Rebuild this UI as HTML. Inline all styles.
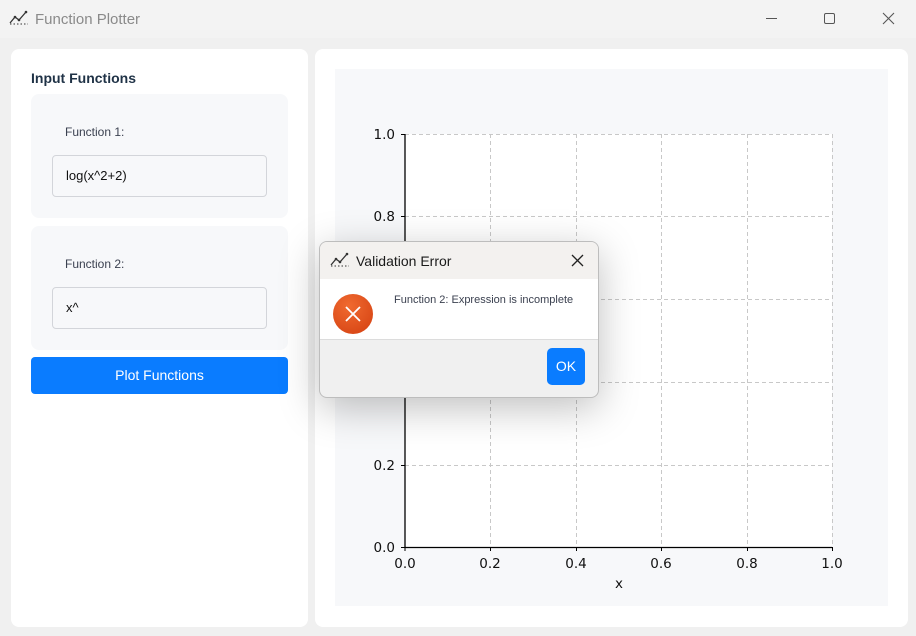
<!DOCTYPE html>
<html><head><style>
*{box-sizing:border-box;margin:0;padding:0}
body{width:916px;height:636px;background:#f0f0f0;font-family:"Liberation Sans",sans-serif;position:relative;overflow:hidden}
.abs{position:absolute}
.card{background:#f7f8fa;border-radius:8px}
.inp{background:#f7f8fa;border:1px solid #d3d5da;border-radius:4px;font-size:13px;color:#111;padding-left:13px;line-height:40px}
.lbl{font-size:12px;color:#3b4150}
.tk{font-size:14px;color:#111}
</style></head><body>
<div class="abs" style="left:0;top:0;width:916px;height:38px;background:#f3f3f3"></div>
<svg class="abs" style="left:9px;top:10px" width="20" height="16" viewBox="0 0 20 16"><polyline points="1,13 6,7 10,10 17,2" fill="none" stroke="#333" stroke-width="1.3"/><polyline points="1,14 19,14" fill="none" stroke="#333" stroke-width="1" stroke-dasharray="1.5 2"/><circle cx="6" cy="7" r="1.3" fill="#333"/><circle cx="10" cy="10" r="1.3" fill="#333"/><circle cx="17" cy="2" r="1.3" fill="#333"/></svg>
<div class="abs" style="left:35px;top:11px;font-size:15px;color:#8a8a8a">Function Plotter</div>
<div class="abs" style="left:766px;top:18px;width:11px;height:1px;background:#555"></div>
<div class="abs" style="left:824px;top:13px;width:11px;height:11px;border:1px solid #555;border-radius:2px"></div>
<svg class="abs" style="left:882px;top:12px" width="13" height="13"><path d="M1 1L12 12M12 1L1 12" stroke="#555" stroke-width="1.1"/></svg>

<div class="abs" style="left:11px;top:49px;width:297px;height:578px;background:#fff;border-radius:8px"></div>
<div class="abs" style="left:31px;top:70px;font-size:14px;font-weight:bold;color:#1f3246">Input Functions</div>
<div class="abs card" style="left:31px;top:94px;width:257px;height:124px"></div>
<div class="abs lbl" style="left:65px;top:125px">Function 1:</div>
<div class="abs inp" style="left:52px;top:155px;width:215px;height:42px">log(x^2+2)</div>
<div class="abs card" style="left:31px;top:226px;width:257px;height:124px"></div>
<div class="abs lbl" style="left:65px;top:257px">Function 2:</div>
<div class="abs inp" style="left:52px;top:287px;width:215px;height:42px">x^</div>
<div class="abs" style="left:31px;top:357px;width:257px;height:37px;background:#0a7cff;border-radius:4px;color:#fff;font-size:14px;text-align:center;line-height:37px">Plot Functions</div>

<div class="abs" style="left:315px;top:49px;width:593px;height:578px;background:#fff;border-radius:8px"></div>
<div class="abs" style="left:335px;top:69px;width:553px;height:537px;background:#f7f8fa"></div>
<svg class="abs" style="left:335px;top:69px" width="553" height="537">
<rect x="70" y="65" width="427" height="413" fill="#fff"/>
<g stroke="#c8c8c8" stroke-dasharray="4 3" stroke-width="1">
<path d="M155.5 65V478M241.5 65V478M326.5 65V478M412.5 65V478M497.5 65V478"/>
<path d="M70 65.5H497M70 147.5H497M70 230.5H497M70 313.5H497M70 396.5H497"/>
</g>
<path d="M70 65V478.5H497" fill="none" stroke="#000" stroke-width="1.3"/>
<g stroke="#000"><path d="M66 65.5H70M66 147.5H70M66 230.5H70M66 313.5H70M66 396.5H70M66 478.5H70"/><path d="M70 478v4M155.5 478v4M241.5 478v4M326.5 478v4M412.5 478v4M497.5 478v4"/></g>
<g font-family="DejaVu Sans,sans-serif" font-size="13.5" fill="#111" text-anchor="end">
<text x="60" y="70">1.0</text><text x="60" y="152">0.8</text><text x="60" y="235">0.6</text><text x="60" y="318">0.4</text><text x="60" y="401">0.2</text><text x="60" y="483">0.0</text></g>
<g font-family="DejaVu Sans,sans-serif" font-size="13.5" fill="#111" text-anchor="middle">
<text x="70" y="499">0.0</text><text x="155" y="499">0.2</text><text x="241" y="499">0.4</text><text x="326" y="499">0.6</text><text x="412" y="499">0.8</text><text x="497" y="499">1.0</text><text x="284" y="519">x</text></g>
</svg>

<div class="abs" style="left:319px;top:241px;width:280px;height:157px;border:1px solid #bdbdbd;border-radius:8px;overflow:hidden;box-shadow:0 10px 40px rgba(0,0,0,0.25);background:#f0f0f0">
 <div style="height:37px;background:#f3f1ef;position:relative">
  <svg class="abs" style="left:10px;top:10px" width="20" height="16" viewBox="0 0 20 16"><polyline points="1,13 6,7 10,10 17,2" fill="none" stroke="#333" stroke-width="1.3"/><polyline points="1,14 19,14" fill="none" stroke="#333" stroke-width="1" stroke-dasharray="1.5 2"/><circle cx="6" cy="7" r="1.3" fill="#333"/><circle cx="10" cy="10" r="1.3" fill="#333"/><circle cx="17" cy="2" r="1.3" fill="#333"/></svg>
  <div class="abs" style="left:36px;top:11px;font-size:14px;color:#1a1a1a">Validation Error</div>
  <svg class="abs" style="left:251px;top:12px" width="13" height="13"><path d="M1 1L12 12M12 1L1 12" stroke="#222" stroke-width="1.3"/></svg>
 </div>
 <div style="height:61px;background:#fff;border-bottom:1px solid #dcdcdc;position:relative">
  <div class="abs" style="left:13px;top:15px;width:40px;height:40px;border-radius:50%;background:radial-gradient(circle at 40% 30%,#f06a30,#d33f10)"></div>
  <svg class="abs" style="left:23px;top:25px" width="20" height="20"><path d="M3 3L17 17M17 3L3 17" stroke="#fff" stroke-width="1.8"/></svg>
  <div class="abs" style="left:74px;top:15px;font-size:11px;color:#3b4150">Function 2: Expression is incomplete</div>
 </div>
 <div class="abs" style="left:227px;top:106px;width:38px;height:37px;background:#0a7cff;border-radius:5px;color:#fff;font-size:14px;text-align:center;line-height:37px">OK</div>
</div>
</body></html>
